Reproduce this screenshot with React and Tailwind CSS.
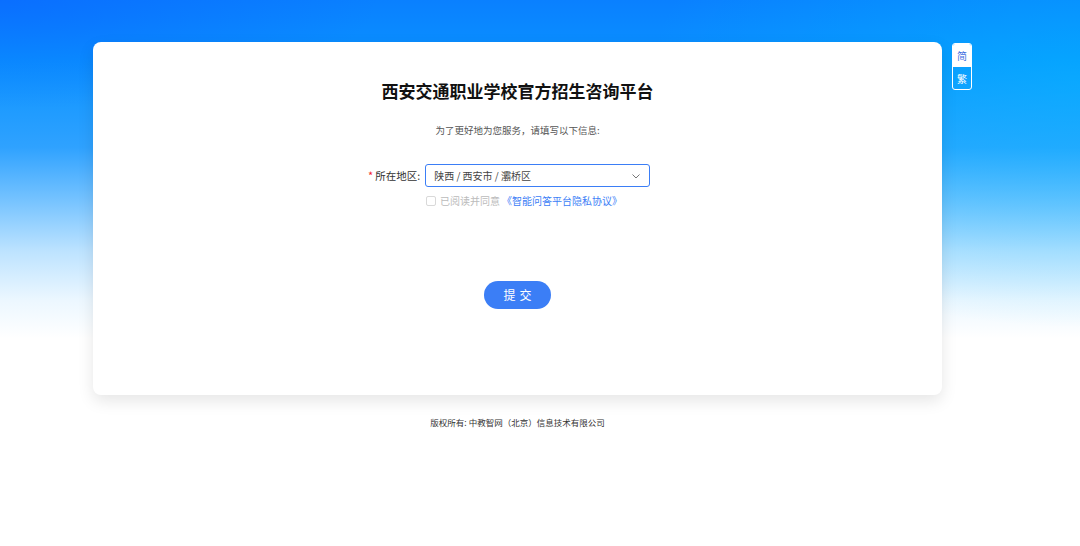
import React from "react";

export default function App() {
  const font = { fontFamily: '"Noto Sans CJK SC", "Noto Sans", sans-serif' };
  return (
    <div
      className="w-[1080px] h-[546px] overflow-hidden bg-white bg-[radial-gradient(ellipse_40%_45%_at_100%_15%,rgba(0,190,255,0.45),transparent),radial-gradient(ellipse_35%_20%_at_0%_0%,rgba(10,90,255,0.45),transparent),linear-gradient(180deg,#0a80ff_0%,#0a92ff_11%,#2fa2ff_27%,#78c4ff_37%,#bde3ff_46%,#ecf7ff_55%,#ffffff_62%)]"
      style={font}
    >
      <div className="flex items-start pl-[93px] pt-[42px]">
        <div className="flex flex-col w-[849px]">
          <div className="w-[849px] h-[353px] bg-white rounded-[8px] shadow-[0_6px_16px_rgba(0,0,0,0.10)] flex flex-col">
            <div className="pt-[36px] text-center text-[17px] leading-[26px] font-bold text-[#111]">
              西安交通职业学校官方招生咨询平台
            </div>
            <div className="mt-[19px] text-center text-[9.5px] leading-[14px] text-[#555]">
              为了更好地为您服务，请填写以下信息:
            </div>
            <div className="mt-[27px] flex items-center pl-[275px]">
              <span className="text-[#f5222d] text-[11px] mr-[2px] leading-none">*</span>
              <span className="text-[10.5px] text-[#333] w-[50px]">所在地区:</span>
              <div className="w-[225px] h-[23px] border border-[#3b7ef6] rounded-[3px] flex items-center justify-between pl-[8px] pr-[8px]">
                <span className="text-[10px] text-[#444]">陕西 / 西安市 / 灞桥区</span>
                <svg width="10" height="10" viewBox="0 0 10 10" fill="none">
                  <path d="M1.5 3.5 L5 7 L8.5 3.5" stroke="#777" strokeWidth="1" />
                </svg>
              </div>
            </div>
            <div className="mt-[8px] flex items-center pl-[333px] h-[11px]">
              <span className="w-[10px] h-[10px] border border-[#d9d9d9] rounded-[2px] bg-white" />
              <span className="ml-[4px] text-[10px] text-[#bbb]">已阅读并同意</span>
              <span className="ml-[2px] text-[10px] text-[#3b7ef6]">《智能问答平台隐私协议》</span>
            </div>
            <div className="mt-[75px] flex justify-center">
              <div className="w-[67px] h-[28px] rounded-full bg-[#3b7ef6] text-white text-[12px] flex items-center justify-center tracking-[4px] pl-[4px]">
                提交
              </div>
            </div>
          </div>
          <div className="mt-[21px] text-center text-[8.5px] leading-[12px] text-[#333]">
            版权所有: 中教智网（北京）信息技术有限公司
          </div>
        </div>
        <div className="ml-[10px] mt-[1px] w-[20px] h-[47px] rounded-[3px] border border-white flex flex-col overflow-hidden">
          <div className="h-[23px] bg-white text-[#3f6fe0] text-[10px] flex items-center justify-center">简</div>
          <div className="flex-1 text-white text-[10px] flex items-center justify-center">繁</div>
        </div>
      </div>
    </div>
  );
}
